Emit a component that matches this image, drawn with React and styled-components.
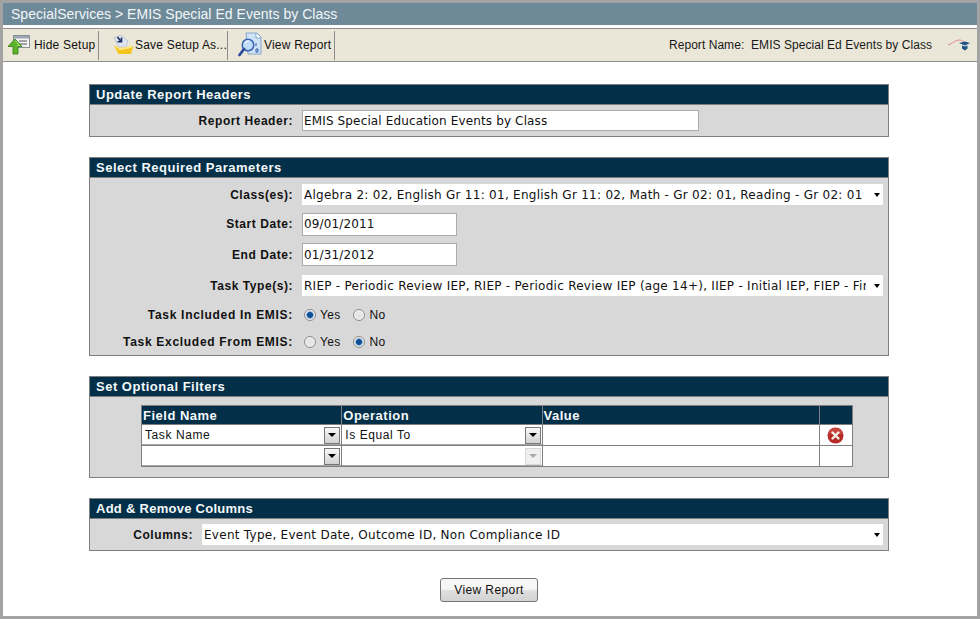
import React from "react";
import styled, { createGlobalStyle } from "styled-components";

const Global = createGlobalStyle`
  html, body { margin: 0; padding: 0; background: #fff; }
  * { box-sizing: border-box; }
`;
const Frame = styled.div`
  width: 980px; height: 619px; border: 3px solid #a3a3a3; background: #fff;
  font-family: "Liberation Sans", Arial, sans-serif; color: #111; overflow: hidden;
  display: flex; flex-direction: column;
`;
const TitleBar = styled.div`
  height: 22px; background: #6e8a99; color: #f2f6f8; font-size: 14px; line-height: 23px; padding-left: 8px; flex: none; letter-spacing: .03px;
`;
const Toolbar = styled.div`
  height: 34px; margin-top: 3px; background: #ebe7d8; border-top: 1px solid #8c8c8c; border-bottom: 1px solid #8c8c8c;
  display: flex; align-items: center; flex: none; font-size: 12px; padding-left: 4px;
`;
const ToolButton = styled.div`
  height: 29px; width: ${p => p.$w}px; border-right: 1px solid #8c8c8c; display: flex; align-items: center; gap: ${p => p.$gap}px;
  padding-left: ${p => p.$pad}px; white-space: nowrap; letter-spacing: .2px;
`;
const ReportName = styled.div`
  margin-left: auto; display: flex; align-items: center; color: #1a1a1a; font-size: 12px; padding-right: 7px;
  white-space: pre; letter-spacing: .05px;
`;
const Cap = styled.svg` margin-left: 16px; `;
const Main = styled.div`
  flex: 1; display: flex; flex-direction: column; align-items: center; padding: 22px 2px 0 0;
`;
const Panel = styled.section`
  width: 800px; border: 1px solid #7f7f7f; background: #d8d8d8; margin-bottom: ${p => p.$mb}px; height: ${p => p.$h}px; flex: none;
`;
const PanelHead = styled.h2`
  margin: 0; height: 20px; background: #033048; color: #f4f8fa; border-bottom: 1px solid #7f7f7f;
  font-size: 13px; font-weight: bold; line-height: 20px; padding-left: 6px; letter-spacing: ${p => p.$track ?? 0.5}px;
`;
const Rows = styled.div`
  padding: ${p => p.$pt}px 5px 0 0; display: flex; flex-direction: column;
`;
const Row = styled.div`
  display: grid; grid-template-columns: ${p => p.$label || 203}px minmax(0, 1fr); column-gap: 9px; align-items: center; height: ${p => p.$h}px;
`;
const Label = styled.label`
  text-align: right; font-weight: bold; font-size: 12px; letter-spacing: ${p => p.$track ?? 0.55}px; white-space: nowrap;
`;
const TextInput = styled.input`
  width: ${p => p.$w}px; height: ${p => p.$h}px; border: 1px solid #ababab; background: #fff; padding: 0 0 0 1px; margin: 0;
  font: 12px "DejaVu Sans", Verdana, sans-serif; color: #111; outline: none;
  letter-spacing: .14px;
`;
const FlatSelect = styled.div`
  height: 21px; background: #fff; display: flex; align-items: center; padding: 0 17px 0 2px;
  font: 12px "DejaVu Sans", Verdana, sans-serif; letter-spacing: .27px; white-space: nowrap; position: relative;
  &::after {
    content: ""; position: absolute; right: 3px; top: 9px; border: 3.5px solid transparent; border-top: 4px solid #000; border-bottom: 0;
  }
`;
const SelectText = styled.span` flex: 1; min-width: 0; overflow: hidden; `;
const Choice = styled.span`
  display: inline-flex; align-items: center; font-size: 12px; margin-right: 11px; letter-spacing: .3px;
`;
const RadioDot = styled.span`
  width: 12px; height: 12px; border-radius: 50%; margin: 0 4px 0 2px; border: 1px solid #8d8d8d;
  background: ${p => p.$on ? "radial-gradient(circle, #0f4f96 0 2.5px, #5e94c8 3.2px, #ececec 4px)" : "radial-gradient(circle, #e4e4e4 0 2px, #f2f2f2 5.5px)"};
`;
const Choices = styled.div` display: flex; align-items: center; padding-top: 1px; `;
const FilterGrid = styled.table`
  margin: 8px 0 0 51px; border-collapse: collapse; table-layout: fixed; width: 712px; background: #fff; font-size: 12px; letter-spacing: .58px;
  & th { background: #033048; color: #f4f8fa; text-align: left; font-size: 13px; height: 19px; padding: 0 0 0 1px; line-height: 17px; border: 1px solid #7f7f7f; letter-spacing: .5px; }
  & td { height: 21px; padding: 0; border: 1px solid #7f7f7f; position: relative; }
`;
const ComboCell = styled.div`
  height: 20px; padding-left: 3px; line-height: 19px; display: flex; align-items: center; justify-content: space-between;
  box-shadow: inset 0 -1px #a8a8a8;
`;
const ComboArrow = styled.span`
  width: 16px; height: 17px; margin-right: 1px; flex: none; border: 1px solid ${p => p.$off ? "#d8d8d8" : "#777"};
  background: ${p => p.$off ? "#f0f0f0" : "linear-gradient(#f8f8f8, #d2d2d2)"}; display: flex; align-items: center; justify-content: center;
  &::before { content: ""; border: 4px solid transparent; border-top: 4px solid ${p => p.$off ? "#aaa" : "#000"}; border-bottom: 0; }
`;
const Center = styled.div` display: flex; justify-content: center; align-items: center; `;
const ViewButton = styled.button`
  width: 98px; height: 24px; border: 1px solid #777; border-radius: 3px; font: 12px "Liberation Sans", Arial, sans-serif;
  background: linear-gradient(#f6f6f6 0 45%, #dedede 55%, #d2d2d2); color: #111; padding: 0; letter-spacing: .4px;
`;

const HideIcon = () => (
  <svg width="22" height="22" viewBox="0 0 22 22">
    <rect x="5.5" y="1.5" width="16" height="12" fill="#f4f4f4" stroke="#8a8f96" />
    <rect x="6" y="2" width="15" height="2.5" fill="#9aa6b2" />
    <path d="M11 7h8M11 10h8" stroke="#555" />
    <path d="M7 5l7 7.5h-4V20H5v-7.5H0z" fill="#5fb32a" stroke="#2f7d14" strokeWidth=".8" />
    <path d="M7 6.5l4.5 5H9" fill="none" stroke="#a8e070" strokeWidth="1" />
  </svg>
);
const SaveIcon = () => (
  <svg width="21" height="22" viewBox="0 0 21 22">
    <path d="M1 4l7-3 7 6-2 6H6z" fill="#dfe4f2" stroke="#aab2c8" strokeWidth=".6" />
    <path d="M4.5 3l3.5 4.5M8.5 3.5v4.2H4.5" fill="none" stroke="#20305a" strokeWidth="1.6" />
    <path d="M1 11.5l5.5 2.5L19.5 12l.5 1-2 7H5.5z" fill="#f5c51c" />
    <path d="M1 11.5l5.5 2.5L19.5 12l-1 2-11.5 2z" fill="#fbe88a" />
  </svg>
);
const ReportIcon = () => (
  <svg width="24" height="26" viewBox="0 0 24 26">
    <path d="M8 1h11l4 4v17H10z" fill="#cfe2f7" stroke="#6f94c4" strokeWidth=".8" />
    <path d="M18 1v5h5" fill="#fff" stroke="#6f94c4" strokeWidth=".8" />
    <path d="M18 11v3M18 17h2v3h-2z" stroke="#2c5f9e" fill="none" />
    <circle cx="10" cy="13" r="5.8" fill="#bfdcf8" stroke="#3a66b0" strokeWidth="1.5" />
    <path d="M6 17L1.5 23" stroke="#2b4c9a" strokeWidth="2.8" strokeLinecap="round" />
    <path d="M7 11a4 4 0 0 1 4-2" stroke="#fff" fill="none" />
  </svg>
);
const DeleteIcon = () => (
  <svg width="17" height="17" viewBox="0 0 17 17">
    <circle cx="8.5" cy="8.5" r="8" fill="#b52a26" />
    <path d="M1.5 7a7 6 0 0 1 14 0z" fill="#d65a50" opacity=".6" />
    <path d="M5.5 5.5l6 6M11.5 5.5l-6 6" stroke="#f4efe9" strokeWidth="2.4" strokeLinecap="round" />
  </svg>
);

const Radio = ({ on, children }) => <Choice><RadioDot $on={on} />{children}</Choice>;
const Combo = ({ text, off }) => <ComboCell><span>{text}</span><ComboArrow $off={off} /></ComboCell>;
const Select = ({ children }) => <FlatSelect><SelectText>{children}</SelectText></FlatSelect>;

export default function App() {
  return (
    <Frame>
      <Global />
      <TitleBar>SpecialServices &gt; EMIS Special Ed Events by Class</TitleBar>
      <Toolbar>
        <ToolButton $w={92} $gap={4} $pad={1}><HideIcon />Hide Setup</ToolButton>
        <ToolButton $w={129} $gap={1} $pad={14}><SaveIcon />Save Setup As...</ToolButton>
        <ToolButton $w={107} $gap={2} $pad={10}><ReportIcon />View Report</ToolButton>
        <ReportName>
          Report Name:  EMIS Special Ed Events by Class
          <Cap width="22" height="12" viewBox="0 0 22 12">
            <path d="M0 6C4 5 7 1 11 1c2 0 3 .5 5 1.5" fill="none" stroke="#e58a96" strokeWidth="1" />
            <path d="M11 4l6-1.5L22 4l-5 2.5z" fill="#1c5586" />
            <path d="M14 6.5v3l3 2 2.5-2v-3l-2.5 1z" fill="#1c5586" />
          </Cap>
        </ReportName>
      </Toolbar>
      <Main>
        <Panel $h={53} $mb={20}>
          <PanelHead>Update Report Headers</PanelHead>
          <Rows $pt={5}>
            <Row $h={21}><Label>Report Header:</Label><TextInput $w={397} $h={21} readOnly value="EMIS Special Education Events by Class" /></Row>
          </Rows>
        </Panel>
        <Panel $h={199} $mb={20}>
          <PanelHead>Select Required Parameters</PanelHead>
          <Rows $pt={2}>
            <Row $h={29}><Label>Class(es):</Label><Select>Algebra 2: 02, English Gr 11: 01, English Gr 11: 02, Math - Gr 02: 01, Reading - Gr 02: 01</Select></Row>
            <Row $h={30}><Label>Start Date:</Label><TextInput $w={155} $h={23} readOnly value="09/01/2011" /></Row>
            <Row $h={31}><Label>End Date:</Label><TextInput $w={155} $h={23} readOnly value="01/31/2012" /></Row>
            <Row $h={31}><Label>Task Type(s):</Label><Select>RIEP - Periodic Review IEP, RIEP - Periodic Review IEP (age 14+), IIEP - Initial IEP, FIEP - Final IEP</Select></Row>
            <Row $h={27}><Label $track={0.7}>Task Included In EMIS:</Label><Choices><Radio on>Yes</Radio><Radio>No</Radio></Choices></Row>
            <Row $h={27}><Label $track={0.7}>Task Excluded From EMIS:</Label><Choices><Radio>Yes</Radio><Radio on>No</Radio></Choices></Row>
          </Rows>
        </Panel>
        <Panel $h={102} $mb={20}>
          <PanelHead>Set Optional Filters</PanelHead>
          <FilterGrid>
            <colgroup><col width="200" /><col width="200" /><col width="277" /><col width="33" /></colgroup>
            <thead><tr><th>Field Name</th><th>Operation</th><th>Value</th><th /></tr></thead>
            <tbody>
              <tr>
                <td><Combo text="Task Name" /></td>
                <td><Combo text="Is Equal To" /></td>
                <td />
                <td><Center><DeleteIcon /></Center></td>
              </tr>
              <tr>
                <td><Combo text="" /></td>
                <td><Combo text="" off /></td>
                <td />
                <td />
              </tr>
            </tbody>
          </FilterGrid>
        </Panel>
        <Panel $h={53} $mb={27}>
          <PanelHead $track={0.27}>Add &amp; Remove Columns</PanelHead>
          <Rows $pt={5}>
            <Row $h={21} $label={103}>
              <Label>Columns:</Label>
              <Select>Event Type, Event Date, Outcome ID, Non Compliance ID</Select>
            </Row>
          </Rows>
        </Panel>
        <ViewButton>View Report</ViewButton>
      </Main>
    </Frame>
  );
}
